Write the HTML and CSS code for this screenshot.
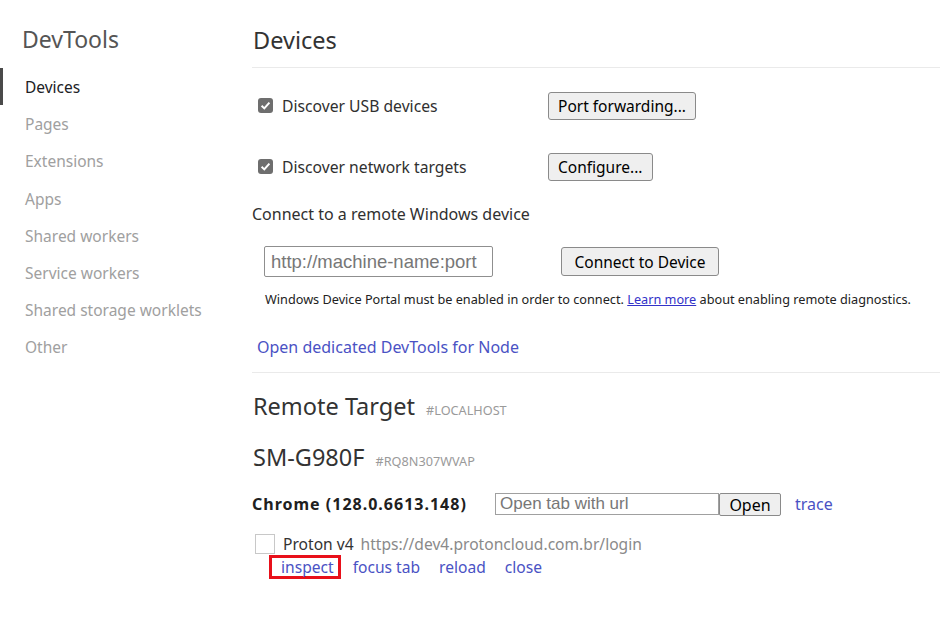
FILE: index.html
```html
<!DOCTYPE html>
<html>
    <head>
        <title>Inspect with Chrome Developer Tools</title>
        <meta charset="utf-8">
        <link rel="stylesheet" href="styles.css">
    </head>
    <body>
        <div class="frame">
            <div class="sidebar">
                <div class="side-title">DevTools</div>
                <div class="side-item active">Devices</div>
                <div class="side-item">Pages</div>
                <div class="side-item">Extensions</div>
                <div class="side-item">Apps</div>
                <div class="side-item">Shared workers</div>
                <div class="side-item">Service workers</div>
                <div class="side-item">Shared storage worklets</div>
                <div class="side-item">Other</div>
            </div>

            <div class="content">
                <div class="page-title">Devices</div>

                <div class="option-row first">
                    <label class="check-label"><span class="check"><svg width="11" height="11" viewBox="0 0 11 11"><path d="M1.6 5.8 L4.3 8.4 L9.4 2.6" fill="none" stroke="#fff" stroke-width="2"/></svg></span>Discover USB devices</label>
                    <button class="btn">Port forwarding...</button>
                </div>
                <div class="option-row">
                    <label class="check-label"><span class="check"><svg width="11" height="11" viewBox="0 0 11 11"><path d="M1.6 5.8 L4.3 8.4 L9.4 2.6" fill="none" stroke="#fff" stroke-width="2"/></svg></span>Discover network targets</label>
                    <button class="btn">Configure...</button>
                </div>

                <div class="remote-title">Connect to a remote Windows device</div>
                <div class="remote-row">
                    <input class="remote-input" type="text" placeholder="http://machine-name:port">
                    <button class="btn btn-connect">Connect to Device</button>
                </div>
                <div class="remote-note">Windows Device Portal must be enabled in order to connect. <a href="#" class="note-link">Learn more</a> about enabling remote diagnostics.</div>

                <div class="node-row"><a href="#" class="action">Open dedicated DevTools for Node</a></div>

                <div class="section-title">Remote Target <span class="tag">#LOCALHOST</span></div>
                <div class="device-title">SM-G980F <span class="tag">#RQ8N307WVAP</span></div>

                <div class="browser-row">
                    <span class="browser-name">Chrome (128.0.6613.148)</span>
                    <input class="open-input" type="text" placeholder="Open tab with url">
                    <button class="btn btn-open">Open</button>
                    <a href="#" class="action trace">trace</a>
                </div>

                <div class="page-row">
                    <span class="thumb"></span>
                    <span class="page-name">Proton v4</span>
                    <span class="page-url">https://dev4.protoncloud.com.br/login</span>
                </div>
                <div class="actions">
                    <a href="#" class="action highlighted">inspect</a>
                    <a href="#" class="action">focus tab</a>
                    <a href="#" class="action">reload</a>
                    <a href="#" class="action">close</a>
                </div>
            </div>
        </div>
    </body>
</html>
```

FILE: styles.css
```css
body{
    margin: 0;
    background: #fff;
    color: #303030;
    font-family: "Noto Sans", "Open Sans", sans-serif;
    font-size: 16px;
}

.frame{
    display: flex;
    width: 940px;
    height: 627px;
    overflow: hidden;
}

/* barra lateral */
.sidebar{
    width: 252px;
    flex-shrink: 0;
}
.side-title{
    padding: 13px 0 0 22px;
    height: 55px;
    line-height: 52px;
    font-size: 23px;
    color: #555;
}
.side-item{
    height: 37.2px;
    line-height: 39px;
    padding-left: 22px;
    border-left: 3px solid transparent;
    color: #a0a0a0;
    font-size: 15.5px;
}
.side-item.active{
    color: #202124;
    border-left-color: #4a4a4a;
}

/* conteudo */
.content{
    flex: 1;
}
.page-title{
    height: 54px;
    padding-top: 13px;
    line-height: 54px;
    font-size: 23.5px;
    color: #333;
    padding-left: 1px;
    border-bottom: 1px solid #eaeaea;
}

.option-row{
    display: flex;
    align-items: center;
    height: 61px;
}
.option-row.first{ margin-top: 7px; }
.check-label{
    display: flex;
    align-items: center;
    width: 296px;
    padding-left: 6px;
    box-sizing: border-box;
    font-size: 15.7px;
}
.check{
    width: 15px;
    height: 15px;
    border-radius: 3px;
    background: #6e6e6e;
    margin-right: 9px;
    display: flex;
    align-items: center;
    justify-content: center;
}

.btn{
    font-family: "Noto Sans", "Open Sans", sans-serif;
    font-size: 15.5px;
    color: #000;
    background: #efefef;
    border: 1px solid #8a8a8a;
    border-radius: 3px;
    height: 28px;
    padding: 0 9px;
}

.remote-title{
    margin-top: 5px;
    line-height: 24px;
}
.remote-row{
    display: flex;
    align-items: center;
    margin-top: 20px;
    height: 31px;
    padding-left: 12px;
}
.remote-input{
    width: 229px;
    height: 31px;
    box-sizing: border-box;
    border: 1px solid #8f8f8f;
    border-radius: 2px;
    padding: 0 6px;
    font-family: "Liberation Sans", Arial, sans-serif;
    font-size: 18.5px;
}
.remote-input::placeholder, .open-input::placeholder{
    color: #777;
}
.btn-connect{
    margin-left: 68px;
    height: 29px;
    width: 158px;
}
.remote-note{
    margin-top: 13px;
    padding-left: 13px;
    line-height: 18px;
    font-size: 12.7px;
    color: #222;
}
.note-link{
    color: #3232c8;
}

.node-row{
    margin-top: 27px;
    line-height: 24px;
    padding-left: 5px;
    padding-bottom: 13px;
    border-bottom: 1px solid #eaeaea;
}

a.action{
    color: #4a52c4;
    text-decoration: none;
}

.section-title, .device-title{
    line-height: 32px;
    font-size: 23.5px;
    color: #333;
    padding-left: 1px;
}
.section-title{ margin-top: 17px; }
.device-title{ margin-top: 15px; }
.tag{
    font-size: 12.7px;
    color: #9a9a9a;
    text-transform: uppercase;
    margin-left: 5px;
}

.browser-row{
    display: flex;
    align-items: center;
    margin-top: 15px;
    height: 24px;
}
.browser-name{
    font-weight: bold;
    color: #202020;
    width: 243px;
    letter-spacing: 1px;
}
.open-input{
    width: 224px;
    height: 22px;
    box-sizing: border-box;
    border: 1px solid #a0a0a0;
    padding: 0 4px;
    font-family: "Liberation Sans", Arial, sans-serif;
    font-size: 17px;
}
.btn-open{
    height: 23px;
    width: 62px;
    padding: 0;
    border-radius: 2px;
    font-size: 16px;
}
.trace{
    margin-left: 14px;
}

.page-row{
    display: flex;
    align-items: center;
    margin-top: 17px;
    height: 22px;
    padding-left: 3px;
    font-size: 15.6px;
}
.thumb{
    width: 18px;
    height: 18px;
    border: 1px solid #c8c8c8;
    margin-right: 8px;
}
.page-name{
    color: #333;
    margin-right: 7px;
}
.page-url{
    color: #8a8a8a;
}

.actions{
    display: flex;
    align-items: center;
    height: 24px;
    padding-left: 29px;
    font-size: 15.6px;
}
.actions .action{
    margin-right: 19px;
    line-height: 18px;
}
.actions .highlighted{
    border: 3px solid #e8101a;
    padding: 0 4px 0 9px;
    margin-left: -12px;
    margin-right: 12px;
}
```
